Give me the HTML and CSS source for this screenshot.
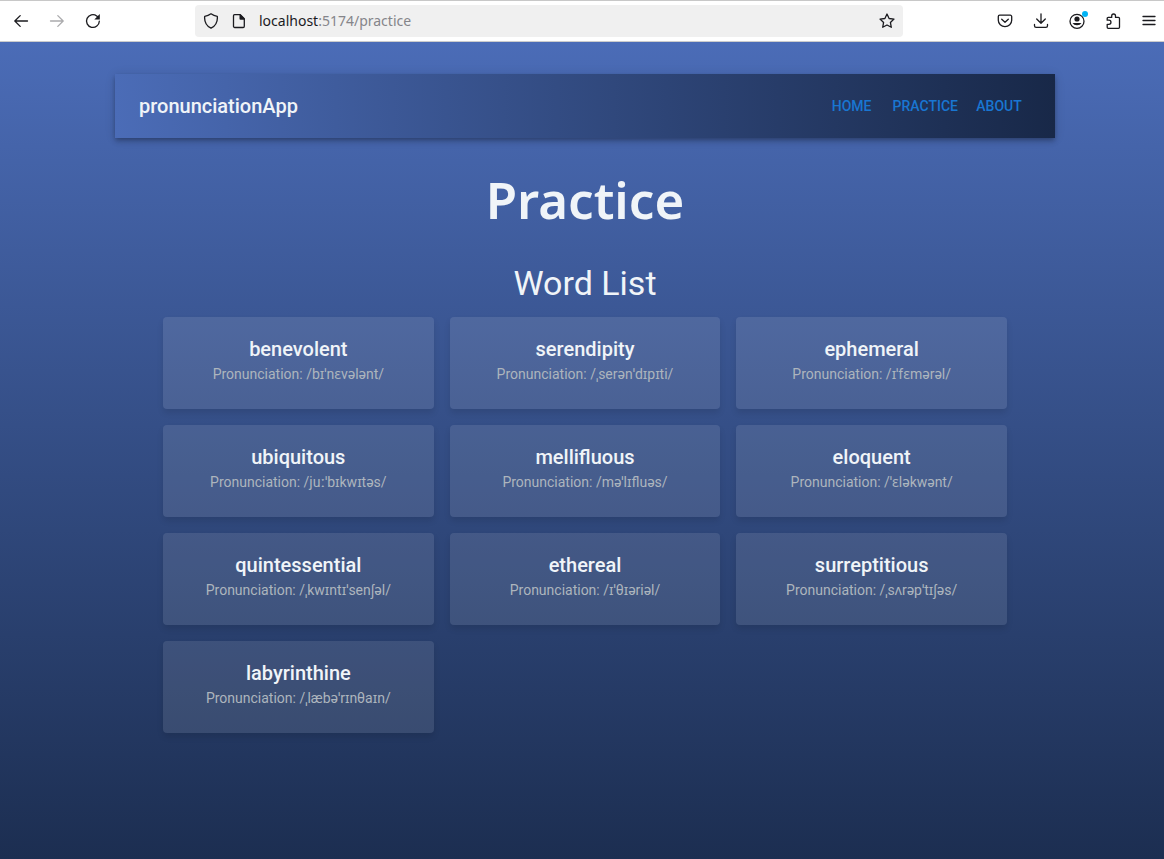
FILE: index.html
```html
<!DOCTYPE html>
<html lang="en">
<head>
<meta charset="utf-8">
<meta name="viewport" content="width=device-width, initial-scale=1">
<title>pronunciationApp</title>
<link rel="stylesheet" href="styles.css">
</head>
<body>
<div class="browser-bar">
  <div class="browser-nav">
    <button class="icon-button" type="button" aria-label="Back"><svg class="icon" viewBox="0 0 16 16"><path d="M14.5 8H2M7.2 2.6L1.8 8l5.4 5.4"/></svg></button>
    <button class="icon-button" type="button" aria-label="Forward" disabled><svg class="icon" viewBox="0 0 16 16"><path d="M1.5 8H14M8.800 2.600L14.200 8l-5.400 5.400"/></svg></button>
    <button class="icon-button" type="button" aria-label="Reload"><svg class="icon" viewBox="0 0 16 16"><path d="M14.300 8.200A6.400 6.400 0 1 1 11.700 2.900l1.300 1.200"/><path class="solid" d="M14.800 1v5.500H9.300z"/></svg></button>
  </div>
  <div class="address">
    <svg class="icon" viewBox="0 0 16 16"><path d="M8 .8c2 1.500 4 2.200 6.300 2.500.5 5.200-1.800 9.600-6.300 11.900C3.500 12.900 1.200 8.500 1.700 3.300 4 3 6 2.300 8 .8z"/></svg>
    <svg class="icon" viewBox="0 0 16 16"><path d="M3.500 1.700h5.800l4 4v7.600a1.200 1.200 0 0 1-1.200 1.200H3.700a1.200 1.200 0 0 1-1.200-1.200V2.700a1 1 0 0 1 1-1z"/><path class="solid" d="M8.500 1.500v4.300a1 1 0 0 0 1 1h4V5.500l-4-4z"/></svg>
    <span class="url">localhost<span class="url-path">:5174/practice</span></span>
    <button class="icon-button bookmark" type="button" aria-label="Bookmark this page"><svg class="icon" viewBox="0 0 16 16"><path d="M8 1l2.100 4.500 4.900.6-3.600 3.300.9 4.900L8 12l-4.300 2.300.9-4.900L1 6.100l4.900-.6z"/></svg></button>
  </div>
  <div class="browser-tools">
    <button class="icon-button" type="button" aria-label="Save to Pocket"><svg class="icon" viewBox="0 0 16 16"><path d="M2.700 2.200h10.600a1.400 1.400 0 0 1 1.400 1.400v3.700a6.700 6.300 0 0 1-13.400 0V3.600a1.400 1.400 0 0 1 1.400-1.400z"/><path d="M4.700 6.200L8 9.300l3.300-3.100"/></svg></button>
    <button class="icon-button" type="button" aria-label="Downloads"><svg class="icon" viewBox="0 0 16 16"><path d="M8 .8v9.400M3.700 6L8 10.300 12.300 6M1.500 11.500v1.200a1.600 1.600 0 0 0 1.600 1.600h9.800a1.600 1.600 0 0 0 1.600-1.600v-1.200"/></svg></button>
    <button class="icon-button account" type="button" aria-label="Account"><svg class="icon" viewBox="0 0 16 16"><circle cx="8" cy="8.300" r="7"/><circle class="solid" cx="8" cy="6" r="2.600"/><path class="solid" d="M3.500 10h9a4.800 3.500 0 0 1-9 0z"/></svg></button>
    <button class="icon-button" type="button" aria-label="Extensions"><svg class="icon" viewBox="0 0 16 16"><path d="M2.200 7.200V5.400a1 1 0 0 1 1-1h3.500V2.900a1.900 1.900 0 0 1 3.800 0v1.500h3a1 1 0 0 1 1 1v8.900a1 1 0 0 1-1 1H3.200a1 1 0 0 1-1-1v-3h1.700a1.900 1.900 0 0 0 0-4.100z"/></svg></button>
    <button class="icon-button" type="button" aria-label="Open menu"><svg class="icon" viewBox="0 0 16 16"><path d="M2 3.500h12M2 7.500h12M2 11.500h12"/></svg></button>
  </div>
</div>
<div class="page">
  <header class="app-bar">
    <div class="brand">pronunciationApp</div>
    <nav class="app-nav">
      <a href="#home">Home</a>
      <a href="#practice">Practice</a>
      <a href="#about">About</a>
    </nav>
  </header>
  <main class="content">
    <h1>Practice</h1>
    <h2>Word List</h2>
    <div class="word-grid">
      <article class="card"><h3>benevolent</h3><p>Pronunciation: /bɪˈnɛvələnt/</p></article>
      <article class="card"><h3>serendipity</h3><p>Pronunciation: /ˌserənˈdɪpɪti/</p></article>
      <article class="card"><h3>ephemeral</h3><p>Pronunciation: /ɪˈfɛmərəl/</p></article>
      <article class="card"><h3>ubiquitous</h3><p>Pronunciation: /juːˈbɪkwɪtəs/</p></article>
      <article class="card"><h3>mellifluous</h3><p>Pronunciation: /məˈlɪfluəs/</p></article>
      <article class="card"><h3>eloquent</h3><p>Pronunciation: /ˈɛləkwənt/</p></article>
      <article class="card"><h3>quintessential</h3><p>Pronunciation: /ˌkwɪntɪˈsenʃəl/</p></article>
      <article class="card"><h3>ethereal</h3><p>Pronunciation: /ɪˈθɪəriəl/</p></article>
      <article class="card"><h3>surreptitious</h3><p>Pronunciation: /ˌsʌrəpˈtɪʃəs/</p></article>
      <article class="card"><h3>labyrinthine</h3><p>Pronunciation: /ˌlæbəˈrɪnθaɪn/</p></article>
    </div>
  </main>
</div>
</body>
</html>
```

FILE: styles.css
```css
* {
  box-sizing: border-box;
}

body {
  margin: 0;
  min-height: 100vh;
  display: flex;
  flex-direction: column;
  font-family: Roboto, "Noto Sans", sans-serif;
  color: #f0f4f8;
}

h1, h2, h3, p {
  margin: 0;
}

.browser-bar {
  display: grid;
  grid-template-columns: 187px minmax(200px, 708px) 1fr;
  column-gap: 8px;
  align-items: center;
  height: 42px;
  border-top: 1px solid #c8c8c8;
  border-bottom: 1px solid #cccccc;
  background: #ffffff;
  color: #1b1b1f;
}

.browser-nav,
.browser-tools {
  display: flex;
  align-items: center;
  gap: 20px;
}

.browser-nav {
  padding-left: 13px;
}

.browser-tools {
  justify-content: flex-end;
  padding-right: 7px;
}

.icon-button {
  display: flex;
  padding: 0;
  border: 0;
  background: none;
  color: inherit;
}

.icon-button:disabled {
  color: #ababad;
}

.icon {
  width: 16px;
  height: 16px;
  flex: none;
  fill: none;
  stroke: currentColor;
  stroke-width: 1.3;
  stroke-linecap: round;
  stroke-linejoin: round;
}

.icon .solid {
  fill: currentColor;
  stroke: none;
}

.address {
  display: flex;
  align-items: center;
  gap: 12px;
  height: 32px;
  padding: 0 8px;
  border-radius: 4px;
  background: #f0f0f0;
}

.url {
  font: 14px/20px "Noto Sans", sans-serif;
}

.url-path {
  color: #85858a;
}

.bookmark {
  margin-left: auto;
}

.account {
  position: relative;
}

.account::after {
  content: "";
  position: absolute;
  top: -2px;
  right: -3px;
  width: 6px;
  height: 6px;
  border-radius: 50%;
  background: #00b3f4;
}

.page {
  flex: 1;
  padding: 32px 32px 32px 38px;
  background: linear-gradient(to bottom, #4b6cb7, #1c2e51);
}

.app-bar,
.content {
  max-width: 940px;
  margin: 0 auto;
}

.app-bar {
  display: flex;
  align-items: center;
  justify-content: space-between;
  min-height: 64px;
  padding: 0 24px;
  background: linear-gradient(to right, #4b6cb7, #182848);
  box-shadow: 0 2px 4px -1px rgba(0, 0, 0, 0.2), 0 4px 5px rgba(0, 0, 0, 0.14), 0 1px 10px rgba(0, 0, 0, 0.12);
}

.brand {
  font-size: 20px;
  font-weight: 500;
  line-height: 32px;
}

.app-nav {
  display: flex;
  gap: 1px;
}

.app-nav a {
  min-width: 64px;
  padding: 6px 8px;
  color: #1976d2;
  font-size: 14px;
  font-weight: 500;
  line-height: 24px;
  text-align: center;
  text-decoration: none;
  text-transform: uppercase;
}

.content {
  padding: 33px 48px 0;
  text-align: center;
}

h1 {
  margin-bottom: 35px;
  font: 600 51px/56px "Noto Sans", sans-serif;
}

h2 {
  margin-bottom: 13px;
  font-size: 34px;
  font-weight: 400;
  line-height: 42px;
}

.word-grid {
  display: grid;
  grid-template-columns: repeat(3, 1fr);
  gap: 16px;
}

.card {
  padding: 16px 16px 26px;
  border-radius: 4px;
  background: rgba(255, 255, 255, 0.1);
  box-shadow: 0 4px 6px rgba(0, 0, 0, 0.1);
}

.card h3 {
  font-size: 20px;
  font-weight: 500;
  line-height: 32px;
}

.card p {
  color: #adb5bd;
  font-size: 14px;
  line-height: 18px;
}
```
